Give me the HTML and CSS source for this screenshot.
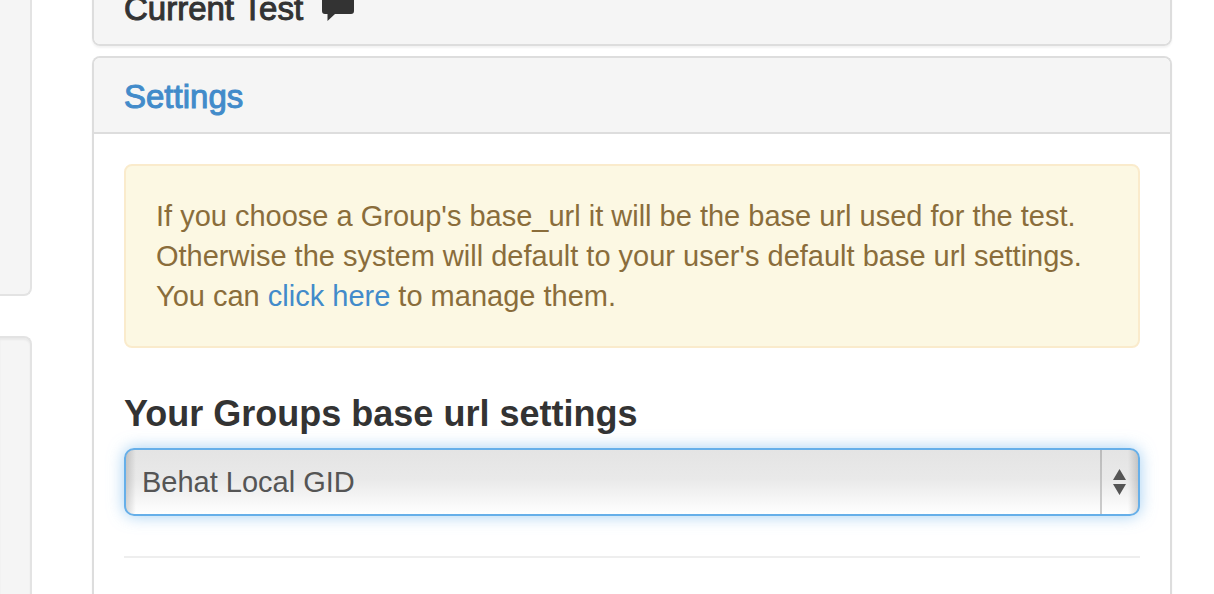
FILE: index.html
```
<!DOCTYPE html>
<html lang="en">
<head>
<meta charset="utf-8">
<title>Test settings</title>
<link rel="stylesheet" href="styles.css">
</head>
<body>
<div class="page">
  <aside class="sidebar">
    <div class="well well-first"></div>
    <div class="well well-last"></div>
  </aside>
  <main class="content">
    <section class="panel">
      <h4 class="panel-heading">Current Test
        <svg class="comment-icon" viewBox="0 0 32 26" aria-hidden="true"><path d="M3 0h26q3 0 3 3v12q0 3-3 3H13L5.500 25V18H3q-3 0-3-3V3q0-3 3-3z"/></svg>
      </h4>
    </section>
    <section class="panel panel-open">
      <h4 class="panel-heading"><a href="#settings">Settings</a></h4>
      <div class="panel-body" id="settings">
        <p class="alert">If you choose a Group's base_url it will be the base url used for the test.<br>Otherwise the system will default to your user's default base url settings.<br>You can <a href="#manage">click here</a> to manage them.</p>
        <label class="field-label" for="base-url">Your Groups base url settings</label>
        <div class="select-box">
          <select id="base-url" class="select">
            <option>Behat Local GID</option>
          </select>
          <svg class="select-arrows" viewBox="0 0 13 26" aria-hidden="true"><path d="M6.500 0L13 11H0zM0 15h13L6.500 26z"/></svg>
        </div>
        <hr class="rule">
      </div>
    </section>
  </main>
</div>
</body>
</html>
```
FILE: styles.css
```
* {
  box-sizing: border-box;
}

body {
  margin: 0;
  background: #fff;
  color: #333;
  font-family: "Liberation Sans", Arial, sans-serif;
  font-size: 29px;
  line-height: 40px;
}

a {
  color: #428bca;
  text-decoration: none;
}

.page {
  display: flex;
  gap: 60px;
  height: 100vh;
  padding-right: 42px;
  overflow: hidden;
}

.sidebar {
  flex: 0 0 32px;
  display: flex;
  flex-direction: column;
  gap: 40px;
}

.well {
  border: 2px solid #e3e3e3;
  border-left: 0;
  border-radius: 0 8px 8px 0;
  background: #f5f5f5;
  box-shadow: inset 0 2px 2px rgba(0, 0, 0, 0.05);
}

.well-first {
  flex: 0 0 296px;
  border-top: 0;
  border-top-right-radius: 0;
  box-shadow: none;
}

.well-last {
  flex: 1;
  border-bottom: 0;
  border-bottom-right-radius: 0;
}

.content {
  flex: 1;
  display: flex;
  flex-direction: column;
  gap: 10px;
  margin-top: -32px;
}

.panel {
  flex: none;
  border: 2px solid #ddd;
  border-radius: 8px;
  box-shadow: 0 2px 2px rgba(0, 0, 0, 0.05);
}

.panel-open {
  flex: 1 0 auto;
  border-bottom: 0;
}

.panel-heading {
  display: flex;
  align-items: center;
  gap: 19px;
  margin: 0;
  padding: 22px 30px 18px;
  border-radius: 6px;
  background: #f5f5f5;
  font-size: 33px;
  font-weight: 500;
  line-height: 34px;
  -webkit-text-stroke: 1px currentColor;
}

.panel-open .panel-heading {
  border-bottom: 2px solid #ddd;
  border-radius: 6px 6px 0 0;
}

.comment-icon {
  width: 32px;
  height: 26px;
  fill: #333;
  -webkit-text-stroke: 0;
}

.panel-body {
  padding: 30px;
}

.alert {
  margin: 0 0 40px;
  padding: 30px;
  border: 2px solid #faebcc;
  border-radius: 8px;
  background: #fcf8e3;
  color: #8a6d3b;
}

.field-label {
  display: block;
  padding-top: 2px;
  margin-bottom: 10px;
  font-size: 36px;
  font-weight: 700;
  line-height: 48px;
}

.select-box {
  position: relative;
}

.select {
  display: block;
  width: 100%;
  height: 68px;
  padding: 0 54px 0 16px;
  appearance: none;
  border: 2px solid #66afe9;
  border-radius: 10px;
  outline: 0;
  background:
    linear-gradient(#bbb, #ccc) right 36px top / 2px 100% no-repeat,
    linear-gradient(to right, rgba(0, 0, 0, 0.15), transparent) left / 10px 100% no-repeat,
    linear-gradient(to left, rgba(0, 0, 0, 0.15), transparent) right / 10px 100% no-repeat,
    linear-gradient(#e4e4e4, #e9e9e9 45%, #fff);
  box-shadow: 0 0 16px rgba(102, 175, 233, 0.6);
  color: #555;
  font: inherit;
}

.select-arrows {
  position: absolute;
  top: 21px;
  right: 14px;
  width: 13px;
  height: 26px;
  fill: #555;
  pointer-events: none;
}

.rule {
  margin: 40px 0;
  border: 0;
  border-top: 2px solid #eee;
}
```
